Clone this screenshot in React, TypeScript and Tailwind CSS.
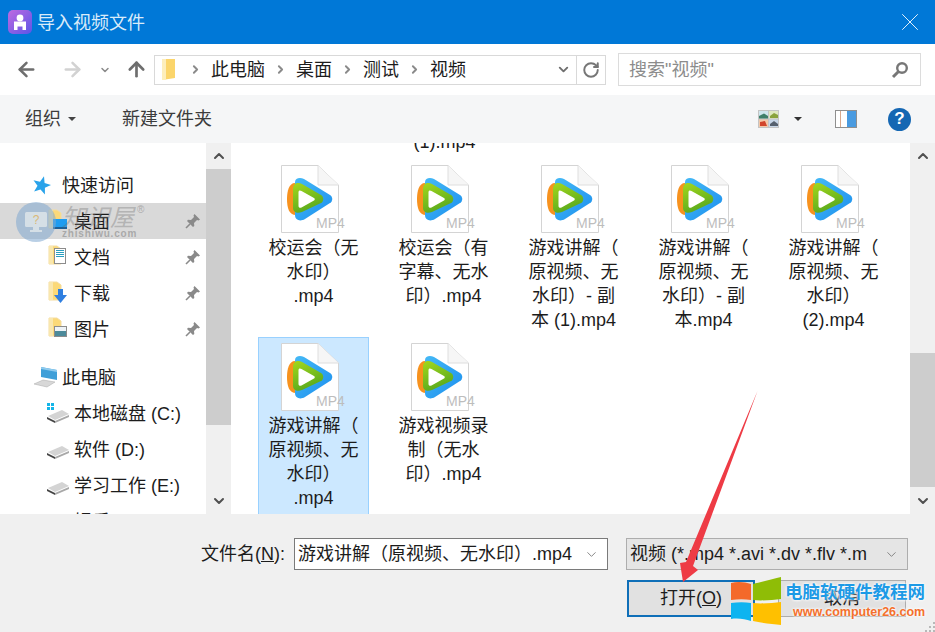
import { ArrowLeft, ArrowRight, ArrowUp, ChevronDown, ChevronRight, ChevronUp, RotateCw, X } from "lucide-react";

// Colourful play logo on a paper sheet
function VideoFile() {
  return (
    <svg width="66" height="68" viewBox="0 0 66 68" className="overflow-visible">
      <defs>
        <linearGradient id="leaf" x1="0" y1="0" x2="0.4" y2="1">
          <stop offset="0" stopColor="#a4d81c" />
          <stop offset="1" stopColor="#5aaa1e" />
        </linearGradient>
        <linearGradient id="sky" x1="0" y1="0" x2="1" y2="1">
          <stop offset="0" stopColor="#45b9f6" />
          <stop offset="1" stopColor="#1c8fee" />
        </linearGradient>
      </defs>
      <path d="M0.5 0.5H37L57.5 20V67.5H0.5Z" fill="#fff" stroke="#d4d4d4" />
      <path d="M37 0.5V20H57.5" fill="#f6f6f6" stroke="#dedede" />
      <path d="M14 18C8 18 6 26 6 34C6 43 8 50 15 50C18 50 20 48 20 46V20C20 19 17 18 14 18Z" fill="#f7921e" />
      <path d="M14 17C14 13 19 12 23 14L49 30C52 32 52 36 49 38L24 54C19 57 14 55 14 50Z" fill="url(#sky)" />
      <path d="M12 24C12 18 17 17 21 19L40 30C43 32 43 36 40 38L21 47C16 49 12 47 12 43Z" fill="url(#leaf)" />
      <path d="M17.5 27C17.5 25.5 19 25 20.5 26L33 33C34 33.7 34 35 33 35.6L20.5 42.5C19 43.2 17.5 42.7 17.5 41Z" fill="#ffffff" />
      <text x="35" y="63" fontSize="14" fill="#bdbdbd" fontFamily="Liberation Sans">MP4</text>
    </svg>
  );
}

function FileItem({ lines, selected }: { lines: string[]; selected?: boolean }) {
  return (
    <div className={`w-[111px] h-[178px] ml-[8px] pt-[5px] flex flex-col items-center overflow-hidden text-[18px] leading-[24px] text-[#1c1c1c] ${selected ? "bg-[#cce8ff] border border-[#99d1ff] -mt-px" : ""}`}>
      <div className="w-[66px] h-[68px] shrink-0">
        <VideoFile />
      </div>
      <div className="mt-[3px] text-center whitespace-nowrap">
        {lines.map((l) => (
          <div key={l}>{l}</div>
        ))}
      </div>
    </div>
  );
}

const Folder = ({ children }: { children?: React.ReactNode }) => (
  <div className="relative w-[22px] h-[24px] shrink-0">
    <svg width="14" height="20" viewBox="0 0 14 20" className="absolute left-[2px] top-0">
      <path d="M1 1H9L13 4V19H1Z" fill="#fbd978" stroke="#f4dca0" />
      <path d="M1 1H5V19H1Z" fill="#f9e7ae" />
    </svg>
    {children}
  </div>
);

const Pin = () => (
  <svg width="16" height="16" viewBox="0 0 16 16" className="shrink-0">
    <path d="M9.5 1L15 6.5L13.5 7.5L12 7L9 10L9.3 13L8 14L2 8L3 6.7L6 7L9 4L8.5 2.5Z" fill="#8a8a8a" />
    <path d="M5 11L1 15" stroke="#8a8a8a" strokeWidth="1.6" />
  </svg>
);

const Drive = ({ win }: { win?: boolean }) => (
  <svg width="24" height="20" viewBox="0 0 24 20" className="shrink-0">
    {win && <path d="M1 0H4V3H1ZM5 0H8V3H5ZM1 4H4V7H1ZM5 4H8V7H5Z" fill="#15b5e8" />}
    <path d="M2 13L16 7L23 11L9 17Z" fill="#d4d4d4" />
    <path d="M1 14L9 18V20L1 16Z" fill="#444" />
    <path d="M9 18L23 12V14L9 20Z" fill="#a8a8a8" />
  </svg>
);

function NavRow({ icon, label, pin, indent }: { icon: React.ReactNode; label: string; pin?: boolean; indent?: boolean }) {
  return (
    <div className={`h-9 flex items-center shrink-0 whitespace-nowrap text-[18px] text-[#1c1c1c] ${indent ? "pl-[46px]" : "pl-[33px]"}`}>
      <div className={`flex items-center ${indent ? "w-[28px]" : "w-[29px]"}`}>{icon}</div>
      <span className="flex-1 pt-[2px]">{label}</span>
      {pin && <div className="mr-[5px]"><Pin /></div>}
    </div>
  );
}

function ScrollBar({ before, thumb }: { before: number; thumb: number }) {
  return (
    <div className="w-[25px] shrink-0 bg-[#f0f0f0] flex flex-col items-center">
      <div className="h-[26px] flex items-center justify-center shrink-0 text-[#505050]">
        <ChevronUp size={16} strokeWidth={3} />
      </div>
      <div className="w-full shrink-0" style={{ height: before }} />
      <div className="w-full bg-[#cdcdcd] shrink-0" style={{ height: thumb }} />
      <div className="flex-1" />
      <div className="h-[26px] flex items-center justify-center shrink-0 text-[#505050]">
        <ChevronDown size={16} strokeWidth={3} />
      </div>
    </div>
  );
}

const Crumb = ({ label }: { label: string }) => (
  <>
    <ChevronRight size={13} strokeWidth={3.5} className="text-[#8a8a8a] ml-[9px] mr-[9px] shrink-0" />
    <span className="pt-[2px] text-[18px] text-[#1c1c1c] whitespace-nowrap">{label}</span>
  </>
);

export default function App() {
  return (
    <div className="relative w-[935px] h-[632px] overflow-hidden flex flex-col bg-white [font-family:'Liberation_Sans','Noto_Sans_CJK_SC',sans-serif]">
      {/* Title bar */}
      <div className="h-[44px] shrink-0 bg-[#0078d7] flex items-center pl-2 pr-[10px]">
        <svg width="24" height="24" viewBox="0 0 24 24" className="shrink-0">
          <defs>
            <linearGradient id="app" x1="0" y1="0" x2="1" y2="1">
              <stop offset="0" stopColor="#c06ae0" />
              <stop offset="1" stopColor="#5a55e8" />
            </linearGradient>
          </defs>
          <rect width="24" height="24" rx="5" fill="url(#app)" />
          <circle cx="12" cy="8" r="3.4" fill="#fff" />
          <path d="M6 11.5H18V20H14.5V16.5H9.5V20H6Z" fill="#fff" />
        </svg>
        <span className="ml-[5px] pt-[2px] text-[18px] text-[#d9ebf9] whitespace-nowrap">导入视频文件</span>
        <X size={30} strokeWidth={0.8} className="ml-auto text-[#e2effa]" />
      </div>

      {/* Address row */}
      <div className="h-[51px] shrink-0 bg-white flex items-center">
        <ArrowLeft size={23} strokeWidth={2.6} className="ml-[15px] text-[#6e6e6e] shrink-0" />
        <ArrowRight size={23} strokeWidth={2.6} className="ml-[23px] text-[#d2d2d2] shrink-0" />
        <ChevronDown size={12} strokeWidth={3} className="ml-[15px] text-[#8a8a8a] shrink-0" />
        <ArrowUp size={23} strokeWidth={2.8} className="ml-[14px] text-[#6e6e6e] shrink-0" />
        <div className="ml-[6px] w-[452px] h-[30px] border border-[#d9d9d9] flex items-center pl-[6px] shrink-0">
          <svg width="15" height="23" viewBox="0 0 15 23" className="shrink-0">
            <path d="M1 1H14V20L1 22Z" fill="#fbd56b" />
            <path d="M1 1H5V22H1Z" fill="#fdeebc" />
          </svg>
          <div className="flex items-center ml-[4px]">
            <Crumb label="此电脑" />
            <Crumb label="桌面" />
            <Crumb label="测试" />
            <Crumb label="视频" />
          </div>
          <ChevronDown size={15} strokeWidth={3} className="ml-auto mr-[5px] text-[#6e6e6e] shrink-0" />
          <div className="w-[29px] h-full border-l border-[#d9d9d9] flex items-center justify-center shrink-0">
            <RotateCw size={18} strokeWidth={2.6} className="text-[#767676]" />
          </div>
        </div>
        <div className="ml-[12px] w-[303px] h-[33px] border border-[#dcdcdc] flex items-center pl-[10px] pr-[11px] shrink-0">
          <span className="pt-[2px] text-[18px] text-[#8c8c8c] whitespace-nowrap">搜索"视频"</span>
          <svg width="18" height="18" viewBox="0 0 18 18" className="ml-auto">
            <circle cx="11" cy="7" r="4.8" fill="none" stroke="#777" strokeWidth="2.4" />
            <path d="M7.5 10.5L2 16" stroke="#777" strokeWidth="3" />
          </svg>
        </div>
      </div>

      {/* Toolbar */}
      <div className="h-[48px] shrink-0 bg-[#f5f6f7] flex items-center text-[18px] text-[#3c3c3c]">
        <span className="ml-[25px] whitespace-nowrap">组织</span>
        <div className="ml-[7px] w-0 h-0 border-x-[4px] border-x-transparent border-t-[4px] border-t-[#444]" />
        <span className="ml-[46px] whitespace-nowrap">新建文件夹</span>
        <svg width="21" height="18" viewBox="0 0 21 18" className="ml-auto shrink-0">
          <rect width="21" height="18" fill="#c4c4c4" />
          <rect x="1" y="1" width="9" height="7.5" fill="#cfe6ee" />
          <path d="M1 6L6 3.5L10 6V8.5H1Z" fill="#3f7f6a" />
          <rect x="11" y="1" width="9" height="7.5" fill="#dfe8c0" />
          <path d="M12 6L16 3L20 5V8H12Z" fill="#8aa33c" />
          <rect x="1" y="9.5" width="9" height="7.5" fill="#f4c8a8" />
          <path d="M2 12L7 11L9 16H2Z" fill="#d2452c" />
          <rect x="11" y="9.5" width="9" height="7.5" fill="#c7d6e8" />
          <path d="M12 14L16 11L20 14V16H12Z" fill="#55606e" />
        </svg>
        <div className="ml-[15px] w-0 h-0 border-x-[4px] border-x-transparent border-t-[4px] border-t-[#333] shrink-0" />
        <div className="ml-[33px] w-[22px] h-[18px] border border-[#8f8f8f] flex shrink-0 bg-white">
          <div className="w-[5px] border-r border-[#d8a88c]" />
          <div className="flex-1" />
          <div className="w-[9px] bg-[#4a9be0]" />
        </div>
        <div className="ml-[31px] mr-[24px] w-[23px] h-[23px] rounded-full bg-[#1567b3] text-white text-[17px] font-bold flex items-center justify-center shrink-0">?</div>
      </div>

      {/* Main pane */}
      <div className="h-[371px] shrink-0 flex overflow-hidden">
        <div className="w-[206px] shrink-0 pt-[24px] flex flex-col overflow-hidden">
          <NavRow
            label="快速访问"
            icon={
              <svg width="20" height="19" viewBox="0 0 20 19" className="-ml-px">
                <path d="M12 0.3L12.6 7L19 9L12.9 11.7L12.9 18.4L8.5 13.4L2.1 15.5L5.5 9.7L1.5 4.3L8 5.8Z" fill="#2aa3ea" />
              </svg>
            }
          />
          <div className="bg-[#d9d9d9]">
            <NavRow
              indent
              pin
              label="桌面"
              icon={
                <Folder>
                  <div className="absolute left-[7px] top-[10px] w-[14px] h-[10px] bg-[#1f9cf0] border-b-2 border-[#1d5f95]" />
                </Folder>
              }
            />
          </div>
          <NavRow
            indent
            pin
            label="文档"
            icon={
              <Folder>
                <div className="absolute left-[8px] top-[3px] w-[12px] h-[16px] bg-white border border-[#8c8c8c] flex flex-col gap-px p-px">
                  <div className="h-px bg-[#2a9fc0]" />
                  <div className="h-px bg-[#2a9fc0]" />
                  <div className="h-px bg-[#2a9fc0]" />
                  <div className="h-px bg-[#2a9fc0]" />
                </div>
              </Folder>
            }
          />
          <NavRow
            indent
            pin
            label="下载"
            icon={
              <Folder>
                <svg width="13" height="14" viewBox="0 0 13 14" className="absolute left-[8px] top-[8px]">
                  <path d="M4 0H9V6H13L6.5 14L0 6H4Z" fill="#2f7fe0" />
                </svg>
              </Folder>
            }
          />
          <NavRow
            indent
            pin
            label="图片"
            icon={
              <Folder>
                <div className="absolute left-[8px] top-[9px] w-[13px] h-[11px] bg-[#eef3f7] border border-[#8c8c8c] flex items-end">
                  <div className="w-full h-[5px] bg-[#4c8a9a]" />
                </div>
              </Folder>
            }
          />
          <div className="h-3 shrink-0" />
          <NavRow
            label="此电脑"
            icon={
              <svg width="25" height="21" viewBox="0 0 25 21">
                <path d="M8 0L24 3V13L8 10Z" fill="#3f9fd8" />
                <path d="M8 0L24 3V5L8 2Z" fill="#8fcbee" />
                <path d="M1 17L10 13L22 15L14 20Z" fill="#d8d8d8" stroke="#a8a8a8" strokeWidth="0.5" />
              </svg>
            }
          />
          <NavRow indent label="本地磁盘 (C:)" icon={<Drive win />} />
          <NavRow indent label="软件 (D:)" icon={<Drive />} />
          <NavRow indent label="学习工作 (E:)" icon={<Drive />} />
          <NavRow indent label="娱乐 (F:)" icon={<Drive />} />
        </div>
        <ScrollBar before={0} thumb={256} />

        <div className="flex-1 min-w-0 overflow-hidden pl-[19px]">
          <div className="h-[17px] overflow-hidden grid grid-cols-[130px_130px] text-[18px] leading-[24px] text-[#1c1c1c]">
            <div />
            <div className="text-center -mt-[13px] -ml-[1px]">(1).mp4</div>
          </div>
          <div className="grid grid-cols-[130px_130px_130px_130px_130px]">
            <FileItem lines={["校运会（无", "水印）", ".mp4"]} />
            <FileItem lines={["校运会（有", "字幕、无水", "印）.mp4"]} />
            <FileItem lines={["游戏讲解（", "原视频、无", "水印）- 副", "本 (1).mp4"]} />
            <FileItem lines={["游戏讲解（", "原视频、无", "水印）- 副", "本.mp4"]} />
            <FileItem lines={["游戏讲解（", "原视频、无", "水印）", "(2).mp4"]} />
            <FileItem selected lines={["游戏讲解（", "原视频、无", "水印）", ".mp4"]} />
            <FileItem lines={["游戏视频录", "制（无水", "印）.mp4"]} />
          </div>
        </div>
        <ScrollBar before={184} thumb={134} />
      </div>

      {/* Footer */}
      <div className="flex-1 bg-[#f0f0f0] pt-[24px] text-[18px] text-[#1c1c1c]">
        <div className="flex items-center h-[32px] pl-[201px]">
          <span className="w-[93px] whitespace-nowrap">文件名(<span className="underline">N</span>):</span>
          <div className="w-[314px] h-[32px] bg-white border border-[#7a7a7a] flex items-center pl-[3px] pr-[8px] shrink-0 whitespace-nowrap">
            <span>游戏讲解（原视频、无水印）.mp4</span>
            <ChevronDown size={15} strokeWidth={1.4} className="ml-auto text-[#777]" />
          </div>
          <div className="ml-[18px] w-[282px] h-[32px] bg-[#e5e5e5] border border-[#adadad] flex items-center pl-[3px] pr-[8px] shrink-0 whitespace-nowrap overflow-hidden">
            <span>视频 (*.mp4 *.avi *.dv *.flv *.m</span>
            <ChevronDown size={15} strokeWidth={1.4} className="ml-auto text-[#777] shrink-0" />
          </div>
        </div>
        <div className="flex mt-[10px] pl-[627px]">
          <div className="w-[128px] h-[37px] bg-[#e1e1e1] border-2 border-[#0f6fb8] flex items-center justify-center">
            <span>打开(<span className="underline">O</span>)</span>
          </div>
          <div className="ml-[23px] w-[128px] h-[37px] bg-[#e1e1e1] border border-[#adadad] flex items-center justify-center">
            取消
          </div>
        </div>
      </div>

      {/* Image watermark, top-left */}
      <div className="absolute left-[16px] top-[202px] w-[40px] h-[40px] rounded-full bg-[#7fa8cf]/55 flex items-center justify-center">
        <svg width="24" height="24" viewBox="0 0 24 24">
          <rect x="1" y="2" width="22" height="15" rx="1.5" fill="#e4e9ec" opacity="0.75" />
          <path d="M9 17H15V20H18V22H6V20H9Z" fill="#e4e9ec" opacity="0.75" />
          <text x="12" y="14" fontSize="12" textAnchor="middle" fill="#d9b877">?</text>
        </svg>
      </div>
      <div className="absolute left-[62px] top-[201px] whitespace-nowrap text-[24px] leading-[34px] italic text-[#777]/40">知识屋</div>
      <div className="absolute left-[137px] top-[204px] text-[10px] leading-[12px] text-[#777]/50">®</div>
      <div className="absolute left-[62px] top-[228px] text-[10px] leading-[12px] font-bold tracking-[0.8px] text-[#777]/50">zhishiwu.com</div>

      {/* Red annotation arrow */}
      <svg width="935" height="632" viewBox="0 0 935 632" className="absolute left-0 top-0 pointer-events-none">
        <path d="M757.5 391L693 566L698 570L683 582L680 563L686 562Z" fill="#ee3b45" />
      </svg>

      {/* Image watermark, bottom-right */}
      <svg width="52" height="52" viewBox="0 0 52 52" className="absolute left-[730px] top-[575px]">
        <path d="M1 8C8 6 15 7 21 9V25C15 24 8 24 1 25Z" fill="#f4692a" />
        <path d="M23 9C31 7 43 4 51 2V24C43 25 31 26 23 25Z" fill="#8fbd06" />
        <path d="M1 28C8 27 15 27 21 28V46C15 44 8 43 1 44Z" fill="#0db4f0" />
        <path d="M23 28C31 29 43 28 51 27V50C43 49 31 48 23 46Z" fill="#ffc000" />
      </svg>
      <div className="absolute left-[785px] top-[580px] whitespace-nowrap text-[17.5px] leading-[24px] font-bold text-[#1d9ae6] [text-shadow:0_0_3px_#fff,0_0_3px_#fff]">电脑软硬件教程网</div>
      <div className="absolute left-[793px] top-[604px] whitespace-nowrap text-[12.5px] leading-[16px] font-bold text-[#f4702c] [text-shadow:0_0_3px_#fff,0_0_3px_#fff]">www.computer26.com</div>

      {/* Resize grip */}
      <svg width="10" height="10" viewBox="0 0 10 10" className="absolute right-0 bottom-0">
        <path d="M8 0H10V2H8ZM4 4H6V6H4ZM8 4H10V6H8ZM0 8H2V10H0ZM4 8H6V10H4ZM8 8H10V10H8Z" fill="#b8b8b8" />
      </svg>
    </div>
  );
}
